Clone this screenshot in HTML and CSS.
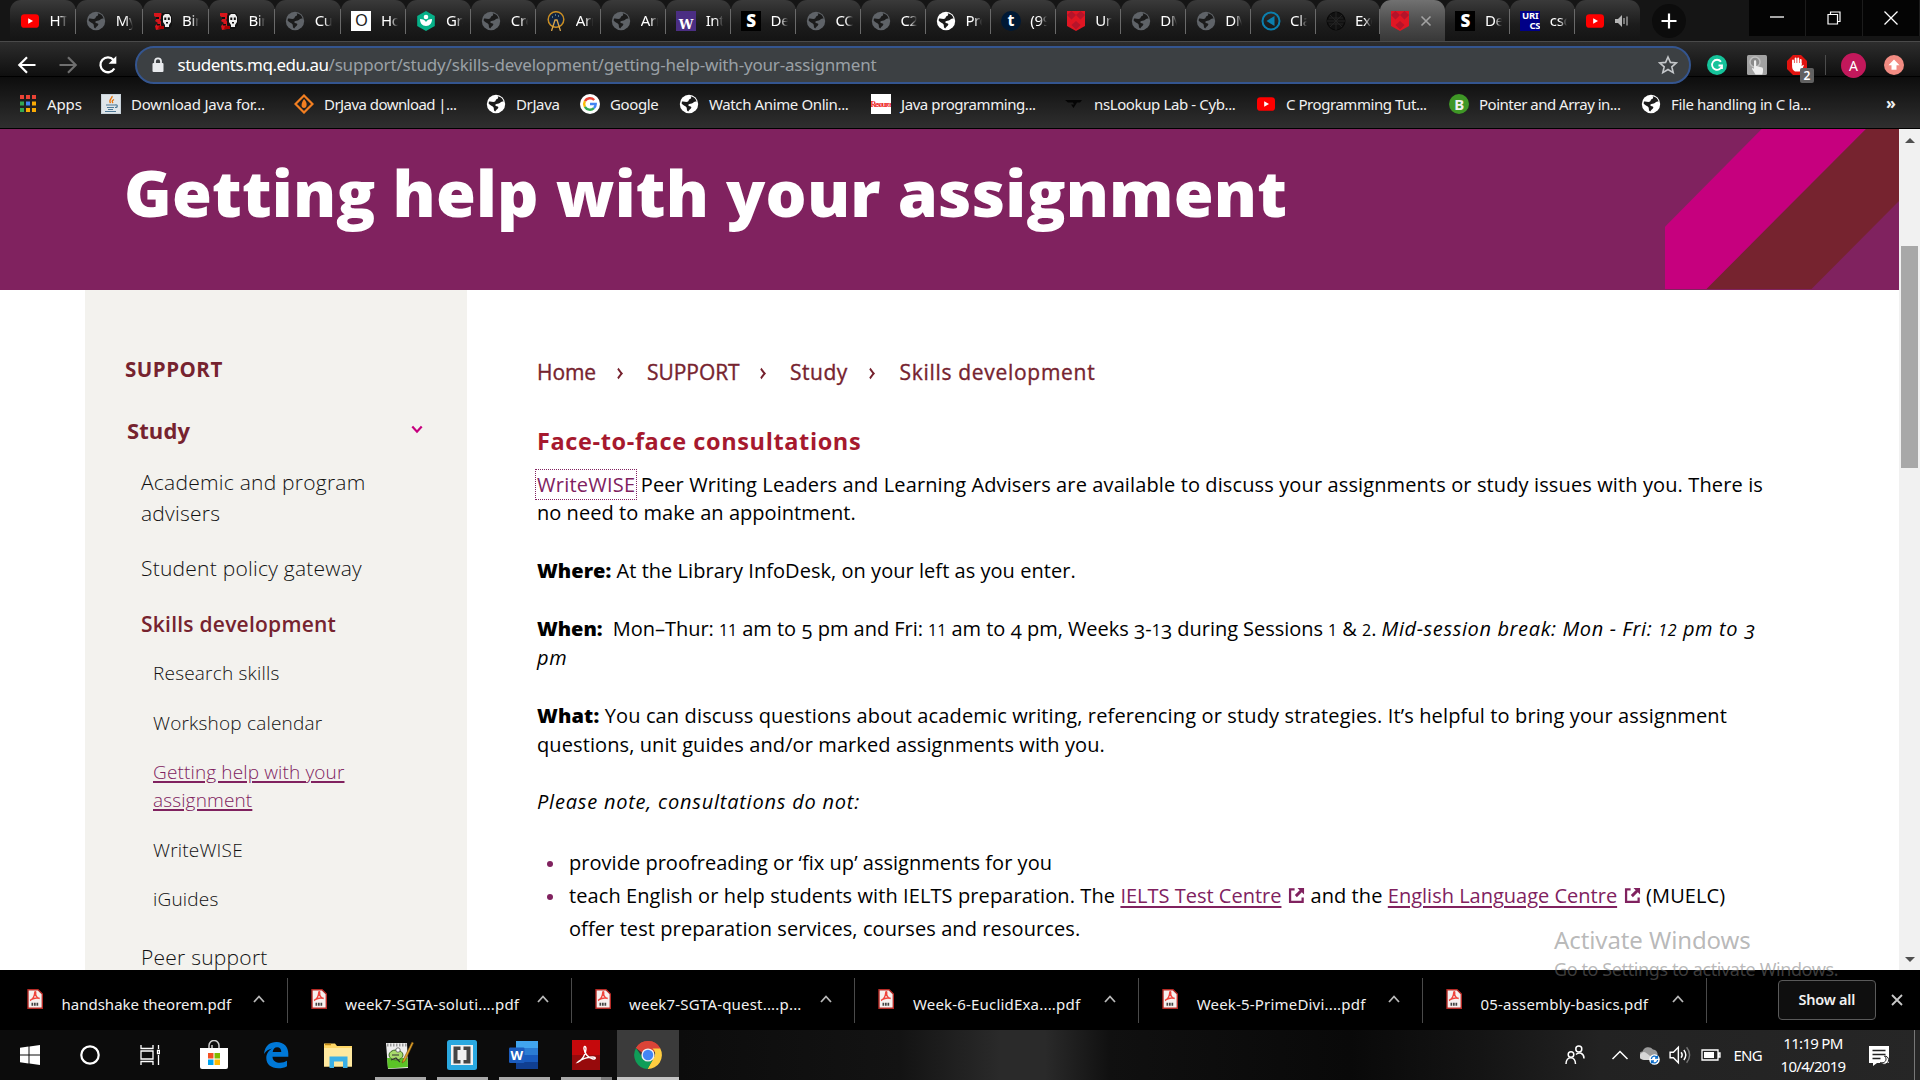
FILE: index.html
```html
<!DOCTYPE html>
<html lang="en">
<head>
<meta charset="utf-8">
<title>Getting help with your assignment</title>
<link rel="stylesheet" href="styles.css">
</head>
<body>
<svg class="defs" aria-hidden="true">
  <symbol id="globe" viewBox="0 0 20 20"><circle cx="10" cy="10" r="9.2" fill="currentColor"/><path d="M3 7.500c2-.5 3.500.8 5.500.3 1.500-.4.8-2.300 2.500-2.800 1.600-.4 1.300-1.700.6-2.700C15 2.800 17 5 17.600 7.600c-1.800-.6-2.800.4-3.800 1.400-1.200 1.200-3.300.4-4.300 1.400-1 .9.900 1.600 2.200 2.100 1.400.6.300 2.300-.9 3-.8.5-1 1.500-1.600 2-1.800-.7-1.100-2.700-1.600-4C7 12 4 11.500 2.600 9.500z" fill="#1b1b1b"/></symbol>
  <symbol id="youtube" viewBox="0 0 20 20"><rect x="1" y="3.200" width="18" height="13.600" rx="3.400" fill="#f00"/><path d="M8.200 7.200v5.600l4.800-2.800z" fill="#fff"/></symbol>
  <symbol id="isaac" viewBox="0 0 20 20"><path d="M1 2h7l2 3-3 4 2 3-1 6-5 1-1-4 3-3-3-2 2-3-3-2z" fill="#d8151b"/><path d="M3 6h3v2H3zM4 13h3v1.500H4z" fill="#111"/><path d="M9 2h8l2 4v8l-3 4h-6l-2-4V5z" fill="#111"/><path d="M10 5l2-2h4l2 3v5l-2 3v2h-4v-2l-2-3z" fill="#eee"/><path d="M11.300 6.500h2v2.500h-2zM14.800 6.500h2v2.500h-2zM13 11h2v1.500h-2z" fill="#111"/><path d="M6 15h5v3H5z" fill="#a00"/></symbol>
  <symbol id="shield" viewBox="0 0 20 20"><path d="M1 0h18v15l-9 5-9-5z" fill="#e01623"/><path d="M5.500 0L10 4 5.500 8.500 1 4zM14.500 0L19 4l-4.500 4.500L10 4zM10 10l4.500 4L10 18.500 5.500 14z" fill="#b5142a"/></symbol>
  <symbol id="pdf" viewBox="0 0 16 20"><path d="M1 .7h10L15.300 5v14.300H1z" fill="#f6f0ef" stroke="#b52a25" stroke-width="1.400"/><path d="M3 11.500c2.500-.9 4.500-4.500 4.800-8.200.1-.9 1-.8.9.1-.4 3.200 1.500 5.500 4 6.100M4 10.700c2.700-1.600 5.600-2 8.500-1.300" fill="none" stroke="#f0443c" stroke-width="1.400"/><path d="M4.500 15.200h7" stroke="#444" stroke-width="3" stroke-dasharray="1.700 .8" fill="none"/></symbol>
  <symbol id="ext" viewBox="0 0 18 18"><path d="M7 2.500H2.200v13.300h13.300V11" fill="none" stroke="currentColor" stroke-width="2.400"/><path d="M10 1h7v7l-2.400-2.400-5.200 5.200-2.200-2.200 5.200-5.200z" fill="currentColor"/></symbol>
</svg>

<header class="browser">
  <div class="tabstrip">
    <div class="tab wide"><svg class="fav"><use href="#youtube"/></svg><span class="tab-title">HTML</span></div>
    <div class="tab wide"><svg class="fav dim"><use href="#globe"/></svg><span class="tab-title">My q</span></div>
    <div class="tab wide"><svg class="fav"><use href="#isaac"/></svg><span class="tab-title">Bind</span></div>
    <div class="tab wide"><svg class="fav"><use href="#isaac"/></svg><span class="tab-title">Bind</span></div>
    <div class="tab wide"><svg class="fav dim"><use href="#globe"/></svg><span class="tab-title">Cus</span></div>
    <div class="tab"><span class="fav tile tile-o">O</span><span class="tab-title">Hov</span></div>
    <div class="tab"><svg class="fav" viewBox="0 0 20 20"><path d="M10 0l8.800 5v10L10 20l-8.800-5V5z" fill="#06b088"/><circle cx="10" cy="6" r="2.300" fill="#fff"/><path d="M4 8c3 0 5 1 6 3 1-2 3-3 6-3 0 4-2 7-6 7S4 12 4 8z" fill="#fff"/></svg><span class="tab-title">Gra</span></div>
    <div class="tab"><svg class="fav dim"><use href="#globe"/></svg><span class="tab-title">Cre</span></div>
    <div class="tab"><svg class="fav" viewBox="0 0 20 20"><circle cx="10" cy="8.500" r="7.800" fill="#10233f" stroke="#c98d22" stroke-width="1.500"/><path d="M5.500 20L9 9h2l3.500 11" fill="none" stroke="#d9a54a" stroke-width="1.300"/><path d="M6 6h1M12 5h1M9 4h1" stroke="#9cc"/></svg><span class="tab-title">Arr</span></div>
    <div class="tab"><svg class="fav dim"><use href="#globe"/></svg><span class="tab-title">Arr</span></div>
    <div class="tab"><span class="fav tile tile-w">W</span><span class="tab-title">Intr</span></div>
    <div class="tab"><span class="fav tile tile-s">S</span><span class="tab-title">Des</span></div>
    <div class="tab"><svg class="fav dim"><use href="#globe"/></svg><span class="tab-title">CO</span></div>
    <div class="tab"><svg class="fav dim"><use href="#globe"/></svg><span class="tab-title">C2C</span></div>
    <div class="tab"><svg class="fav lit"><use href="#globe"/></svg><span class="tab-title">Pro</span></div>
    <div class="tab"><span class="fav tile tile-t">t</span><span class="tab-title">(99</span></div>
    <div class="tab"><svg class="fav"><use href="#shield"/></svg><span class="tab-title">Uni</span></div>
    <div class="tab"><svg class="fav dim"><use href="#globe"/></svg><span class="tab-title">DM</span></div>
    <div class="tab"><svg class="fav dim"><use href="#globe"/></svg><span class="tab-title">DM</span></div>
    <div class="tab"><svg class="fav" viewBox="0 0 20 20"><circle cx="10" cy="10" r="8.500" fill="none" stroke="#0b7fae" stroke-width="2"/><path d="M13.500 5v10L5.500 10z" fill="#0b7fae"/></svg><span class="tab-title">Cla</span></div>
    <div class="tab"><svg class="fav" viewBox="0 0 20 20"><circle cx="10" cy="10" r="9" fill="#111" stroke="#090909"/><path d="M4 4l12 12M16 4L4 16M10 1v18M1 10h18M3 7h14M3 13h14" stroke="#242424"/></svg><span class="tab-title">Exe</span></div>
    <div class="tab tab-active"><svg class="fav"><use href="#shield"/></svg><svg class="tab-close" viewBox="0 0 12 12"><path d="M1.500 1.500l9 9M10.500 1.500l-9 9" stroke="#a3a3a3" stroke-width="1.600"/></svg></div>
    <div class="tab"><span class="fav tile tile-s">S</span><span class="tab-title">Des</span></div>
    <div class="tab"><span class="fav tile tile-u"><span>URI</span><span>CS</span></span><span class="tab-title">csc</span></div>
    <div class="tab tab-last"><svg class="fav"><use href="#youtube"/></svg><svg class="speaker" viewBox="0 0 14 12"><path d="M0 4h3l4-4v12L3 8H0z" fill="#b5b5b5"/><path d="M9 3v6M12 1.500v9" stroke="#b5b5b5" stroke-width="1.200"/></svg></div>
    <div class="newtab"><svg viewBox="0 0 16 16"><path d="M8 .5v15M.5 8h15" stroke="#fff" stroke-width="2.200"/></svg></div>
    <div class="winctl">
      <div><svg viewBox="0 0 14 14"><path d="M0 6h14" stroke="#fff" stroke-width="1.300"/></svg></div>
      <div><svg viewBox="0 0 14 14"><path d="M1 3.500h9.500V13H1zM3.500 3.500V1H13v9.500h-2.500" fill="none" stroke="#fff" stroke-width="1.200"/></svg></div>
      <div><svg viewBox="0 0 14 14"><path d="M.5.5l13 13M13.500.5l-13 13" stroke="#fff" stroke-width="1.300"/></svg></div>
    </div>
  </div>

  <div class="toolbar">
    <svg class="nav" viewBox="0 0 20 20"><path d="M18.500 10H2.500M10 2.300L2.300 10l7.700 7.700" fill="none" stroke="#fff" stroke-width="2.200"/></svg>
    <svg class="nav" viewBox="0 0 20 20"><path d="M1.500 10h16M10 2.300l7.700 7.700-7.700 7.700" fill="none" stroke="#6f6f6f" stroke-width="2.200"/></svg>
    <svg class="nav" viewBox="0 0 20 20"><path d="M16.300 13.500A7.400 7.400 0 1 1 15.500 5" fill="none" stroke="#fff" stroke-width="2.300"/><path d="M18.300 1v7.700h-7.700z" fill="#fff"/></svg>
    <div class="omnibox">
      <svg class="lock" viewBox="0 0 12 16"><path d="M3 7V4.300a3 3 0 0 1 6 0V7" fill="none" stroke="#e8eaed" stroke-width="1.800"/><rect x=".5" y="6" width="11" height="9" rx="1" fill="#e8eaed"/></svg>
      <span class="url"><span class="host">students.mq.edu.au</span><span class="path">/support/study/skills-development/getting-help-with-your-assignment</span></span>
      <svg class="star" viewBox="0 0 20 20"><path d="M10 2l2.400 5.400 5.900.5-4.500 3.900 1.400 5.800-5.200-3.100-5.200 3.100 1.400-5.800-4.500-3.900 5.900-.5z" fill="none" stroke="#c4c7ca" stroke-width="1.600"/></svg>
    </div>
    <div class="extensions">
      <svg class="ico20" viewBox="0 0 20 20"><circle cx="10" cy="10" r="10" fill="#15c39a"/><path d="M14 6.700A5 5 0 1 0 15 10.500h-3.500M15 10.500V14" fill="none" stroke="#fff" stroke-width="1.800"/></svg>
      <svg class="ico20" viewBox="0 0 20 20"><rect width="20" height="20" rx="1.500" fill="#a2a2a2"/><circle cx="8" cy="7" r="5" fill="#8b8b8b" stroke="#c0c0c0" stroke-width="1.500"/><path d="M7 6.500c0-1.600 2.200-1.600 2.200 0V11l6 1.500c1.300.4 1 5.500 0 7H8.500L5 14c0-1.200 1.200-1.200 2 0z" fill="#eee"/></svg>
      <div class="abp"><svg class="ico20" viewBox="0 0 20 20"><path d="M6 0h8l6 6v8l-6 6H6l-6-6V6z" fill="#e1130f"/><path d="M6 9V5.500M8.600 9V3.500M11.200 9V3.500M13.700 9V5" stroke="#fff" stroke-width="1.900" stroke-linecap="round"/><path d="M5.100 8h9.500v3l2-1.200c.8.500-1.600 5.700-4 6.700H8c-2-1-2.900-3-2.900-5z" fill="#fff"/></svg><span class="badge">2</span></div>
      <span class="divider"></span>
      <span class="avatar">A</span>
      <svg class="ico20" viewBox="0 0 20 20"><circle cx="10" cy="10" r="10" fill="#f28b82"/><path d="M10 4.500l5.500 5.700h-3v4.600h-5v-4.600h-3z" fill="#fff"/></svg>
    </div>
  </div>

  <nav class="bookmarks">
    <a class="bm bm-apps"><svg class="bi" viewBox="0 0 20 20"><path d="M2 1h4v4H2zM8 1h4v4H8zM14 1h4v4h-4z" fill="#ea4335"/><path d="M2 7.500h4v4H2z" fill="#34a853"/><path d="M8 7.500h4v4H8z" fill="#4285f4"/><path d="M14 7.500h4v4h-4zM8 14h4v4H8zM14 14h4v4h-4z" fill="#fbab05"/><path d="M2 14h4v4H2z" fill="#34a853"/></svg>Apps</a>
    <a class="bm bm-java"><svg class="bi" viewBox="0 0 20 20"><rect width="20" height="20" fill="#c9d3da"/><rect x="1" y="1" width="18" height="18" fill="#dfe5e9"/><path d="M11 2c1 2-4 3.500-1.500 7M13 5.500c-2 1-2.500 2-1 3.500" fill="none" stroke="#e76f00" stroke-width="1.300"/><path d="M5 11h9c3-1 3 2.500 0 2.500M6 13.500h7M7 15.500h5M4 17.500h11" fill="none" stroke="#4d7896" stroke-width="1.200"/></svg>Download Java for...</a>
    <a class="bm bm-sf"><svg class="bi" viewBox="0 0 20 20"><path d="M10 1.500l8.500 8.500-8.500 8.500L1.500 10z" fill="none" stroke="#f37f21" stroke-width="2.200"/><path d="M10 5c4 4 3 9 0 9s-3.500-4 0-9z" fill="#f37f21"/></svg>DrJava download |...</a>
    <a class="bm bm-dr"><svg class="bi lit"><use href="#globe"/></svg>DrJava</a>
    <a class="bm bm-goog"><svg class="bi" viewBox="0 0 20 20"><circle cx="10" cy="10" r="10" fill="#fff"/><g fill="none" stroke-width="2.400"><path d="M14.200 6A5.800 5.800 0 0 0 4.900 7.200" stroke="#ea4335"/><path d="M4.900 7.200a5.800 5.800 0 0 0 0 5.600" stroke="#fbbc05"/><path d="M4.900 12.800a5.800 5.800 0 0 0 9 1.300" stroke="#34a853"/><path d="M13.900 14.100A5.600 5.600 0 0 0 15.700 10H10" stroke="#4285f4"/></g></svg>Google</a>
    <a class="bm bm-anime"><svg class="bi lit"><use href="#globe"/></svg>Watch Anime Onlin...</a>
    <a class="bm bm-jp"><span class="bi tile tile-r">Resource</span>Java programming...</a>
    <a class="bm bm-ns"><svg class="bi" viewBox="0 0 20 20"><path d="M1 6h17l-2 2.500h-3L9.500 14 7 10.500h3L9 8.500H4z" fill="#050505"/></svg>nsLookup Lab - Cyb...</a>
    <a class="bm bm-c"><svg class="bi"><use href="#youtube"/></svg>C Programming Tut...</a>
    <a class="bm bm-ptr"><span class="bi tile tile-b">B</span>Pointer and Array in...</a>
    <a class="bm bm-file"><svg class="bi lit"><use href="#globe"/></svg>File handling in C la...</a>
    <span class="more">»</span>
  </nav>
</header>

<div class="viewport">
  <main class="page">
    <div class="banner">
      <h1>Getting help with your assignment</h1>
      <svg class="stripes" viewBox="0 0 234 160"><path d="M96.700 0H201L41.600 160H0V97.700z" fill="#c6007e"/><path d="M201 0h33v72l-87.500 88H41.600z" fill="#76232f"/></svg>
    </div>
    <div class="columns">
      <aside class="sidebar">
        <h2>SUPPORT</h2>
        <h3>Study<svg class="chev" viewBox="0 0 14 10"><path d="M1.500 1.500L7 7.500l5.500-6" fill="none" stroke="#c6007e" stroke-width="2.600"/></svg></h3>
        <ul class="level1">
          <li>Academic and program<br>advisers</li>
          <li>Student policy gateway</li>
          <li><strong>Skills development</strong>
            <ul class="level2">
              <li>Research skills</li>
              <li>Workshop calendar</li>
              <li><a class="current">Getting help with your<br>assignment</a></li>
              <li>WriteWISE</li>
              <li>iGuides</li>
            </ul>
          </li>
          <li>Peer support</li>
        </ul>
      </aside>
      <article class="content">
        <nav class="crumbs"><span class="c-home">Home</span><i class="sep"></i><span class="c-sup">SUPPORT</span><i class="sep"></i><span class="c-study">Study</span><i class="sep"></i><span class="c-skill">Skills development</span></nav>
        <h2>Face-to-face consultations</h2>
        <p><a class="focused">WriteWISE</a> Peer Writing Leaders and Learning Advisers are available to discuss your assignments or study issues with you. There is<br><span class="tight">no need to make an appointment.</span></p>
        <p class="tight"><b>Where:</b> At the Library InfoDesk, on your left as you enter.</p>
        <p class="when"><b>When:</b>&nbsp; Mon–Thur: <span class="fx">11</span> am to <span class="fd">5</span> pm and Fri: <span class="fx">11</span> am to <span class="fd">4</span> pm, Weeks <span class="fd">3</span>-<span class="fx">1</span><span class="fd">3</span> during Sessions <span class="fx">1</span> &amp; <span class="fx">2</span>. <em>Mid-session break: Mon - Fri: <span class="fx">12</span> pm to <span class="fd">3</span><br>pm</em></p>
        <p class="what"><b>What:</b> You can discuss questions about academic writing, referencing or study strategies. It’s helpful to bring your assignment<br><span class="guides">questions, unit guides and/or marked assignments with you.</span></p>
        <p><em class="note">Please note, consultations do not:</em></p>
        <ul class="bullets">
          <li>provide proofreading or ‘fix up’ assignments for you</li>
          <li class="teach">teach English or help students with IELTS preparation. The <a>IELTS Test Centre</a><svg class="ext"><use href="#ext"/></svg>and the <a>English Language Centre</a><svg class="ext"><use href="#ext"/></svg>(MUELC)<br>offer test preparation services, courses and resources.</li>
        </ul>
      </article>
    </div>
  </main>
  <div class="scrollbar"><i class="up"></i><i class="thumb"></i><i class="down"></i></div>
</div>

<footer class="downloads">
  <div class="dl"><svg class="pdf"><use href="#pdf"/></svg><span>handshake theorem.pdf</span><svg class="car" viewBox="0 0 12 8"><path d="M1 7l5-5.500L11 7" fill="none" stroke="#b9b9b9" stroke-width="1.800"/></svg></div>
  <div class="dl dl-w"><svg class="pdf"><use href="#pdf"/></svg><span>week7-SGTA-soluti....pdf</span><svg class="car" viewBox="0 0 12 8"><path d="M1 7l5-5.500L11 7" fill="none" stroke="#b9b9b9" stroke-width="1.800"/></svg></div>
  <div class="dl dl-w"><svg class="pdf"><use href="#pdf"/></svg><span>week7-SGTA-quest....p...</span><svg class="car" viewBox="0 0 12 8"><path d="M1 7l5-5.500L11 7" fill="none" stroke="#b9b9b9" stroke-width="1.800"/></svg></div>
  <div class="dl dl-w"><svg class="pdf"><use href="#pdf"/></svg><span>Week-6-EuclidExa....pdf</span><svg class="car" viewBox="0 0 12 8"><path d="M1 7l5-5.500L11 7" fill="none" stroke="#b9b9b9" stroke-width="1.800"/></svg></div>
  <div class="dl dl-w"><svg class="pdf"><use href="#pdf"/></svg><span>Week-5-PrimeDivi....pdf</span><svg class="car" viewBox="0 0 12 8"><path d="M1 7l5-5.500L11 7" fill="none" stroke="#b9b9b9" stroke-width="1.800"/></svg></div>
  <div class="dl dl-w"><svg class="pdf"><use href="#pdf"/></svg><span>05-assembly-basics.pdf</span><svg class="car" viewBox="0 0 12 8"><path d="M1 7l5-5.500L11 7" fill="none" stroke="#b9b9b9" stroke-width="1.800"/></svg></div>
  <button class="showall">Show all</button>
  <svg class="dlclose" viewBox="0 0 12 12"><path d="M1 1l10 10M11 1L1 11" stroke="#c8c8c8" stroke-width="1.800"/></svg>
</footer>

<div class="taskbar">
  <div class="task t-start"><svg viewBox="0 0 20 20"><path d="M0 2.800L8.500 1.600v7.900H0zM9.500 1.500L20 0v9.500H9.500zM0 10.500h8.500v7.900L0 17.200zM9.500 10.500H20V20L9.500 18.500z" fill="#fff"/></svg></div>
  <div class="task"><svg viewBox="0 0 20 20"><circle cx="10" cy="10" r="8.700" fill="none" stroke="#fff" stroke-width="2.200"/></svg></div>
  <div class="task"><svg viewBox="0 0 20 20"><path d="M1 0v3.500h12V0M1 20v-3.500h12V20M1 6h12v8H1zM18.500 0v4M18.500 10v10M17.500 5.500h2v3h-2z" fill="none" stroke="#fff" stroke-width="1.300"/></svg></div>
  <div class="task app store"><svg viewBox="0 0 30 30"><path d="M10 9V5.500a5 5 0 0 1 10 0V9M13 9V5" fill="none" stroke="#ccc" stroke-width="1.500"/><path d="M1 8h28v19a2 2 0 0 1-2 2H3a2 2 0 0 1-2-2z" fill="#fff"/><path d="M9 13h5.500v5.500H9z" fill="#f25022"/><path d="M15.500 13H21v5.500h-5.500z" fill="#7fba00"/><path d="M9 19.500h5.500V25H9z" fill="#00a4ef"/><path d="M15.500 19.500H21V25h-5.500z" fill="#ffb900"/></svg></div>
  <div class="task app"><svg viewBox="0 0 30 30"><path d="M3 14C4 5.500 9 2 15.500 2 23 2 27.300 7 27.300 13.500v3.200H11.500c.2 4.200 3.500 6 7.500 6 2.800 0 5-.8 7-2v5.600c-2.400 1.400-5.300 2-8.500 2C9.800 28.300 5.300 24 5.300 18c0-4 2.200-7.500 6-9.500C7.800 9 4.800 11 3 14zm8.700-2h8.600c0-3-1.500-4.700-4.200-4.700-2.400 0-4 1.800-4.400 4.700z" fill="#0078d7"/></svg></div>
  <div class="task app"><svg viewBox="0 0 30 30"><path d="M1 3.500h11l2 2.500h15v20.500H1z" fill="#ffd766"/><path d="M1 8h28v18.500H1z" fill="#ffe9a0"/><path d="M6.500 28V16.500h18V28H20v-6.500h-9V28z" fill="#3bb0e6"/><path d="M2 4.500h6" stroke="#c58a14" stroke-width="1.500"/></svg></div>
  <div class="task app run"><svg viewBox="0 0 30 30"><path d="M1 3h21l1 25-20 1z" fill="#eee"/><path d="M2 5h20" stroke="#999" stroke-width="3" stroke-dasharray="1.500 1.500"/><path d="M2 18h20.500l.5 9-20 1.500z" fill="#5bc427"/><ellipse cx="11" cy="15" rx="7" ry="5" fill="#a9db6c" stroke="#3e6b26" stroke-width="1"/><circle cx="13" cy="10" r="2.200" fill="#fff" stroke="#555" stroke-width=".8"/><path d="M7 15h7M6 20l5-2 4 4" stroke="#333" stroke-width="1.200" fill="none"/><path d="M27 2l-9 18-1 3 3-2 8.500-18z" fill="#e4a62a" stroke="#704a12" stroke-width=".6"/></svg></div>
  <div class="task app run"><svg viewBox="0 0 30 30"><rect width="30" height="30" rx="2.500" fill="#2aa8e0"/><rect x="4" y="5" width="22" height="20" fill="#f2f2f2"/><path d="M6.500 6.500h7V10h-3v10h3v3.500h-7zM23.500 6.500h-7V10h3v10h-3v3.500h7z" fill="#454545"/></svg></div>
  <div class="task app run"><svg viewBox="0 0 30 30"><path d="M7 1h22v7H7z" fill="#41a5ee"/><path d="M7 8h22v7H7z" fill="#2b7cd3"/><path d="M7 15h22v7H7z" fill="#185abd"/><path d="M7 22h22v7H7z" fill="#103f91"/><rect x="0" y="7.500" width="15.500" height="15.500" rx="1.200" fill="#1b5cbe"/><text class="word-w" x="7.750" y="19.500" text-anchor="middle">W</text></svg></div>
  <div class="task app run split"><svg viewBox="0 0 30 30"><rect x="1" width="28" height="30" fill="#c5090c"/><path d="M1 15h28v15H1z" fill="#970a0c"/><path d="M7 22c3.500-1 8-7.500 8-13 0-3.500-2.500-3-2 0 .7 4.500 4 9 9 10 3 .5 3-2 0-2-5 0-12 2-14.500 4.500z" fill="none" stroke="#fff" stroke-width="1.400"/></svg></div>
  <div class="task app run on"><svg viewBox="0 0 30 30"><path d="M15 15L3 8A14 14 0 0 1 27.500 8.500z" fill="#db4437"/><path d="M15 1a14 14 0 0 1 12.300 7.500H15a6.500 6.500 0 0 0-6 4L3 8A14 14 0 0 1 15 1z" fill="#db4437"/><path d="M27.300 8.500A14 14 0 0 1 14.500 29l6-11a6.500 6.500 0 0 0-1-9.500z" fill="#ffcd40"/><path d="M3 8a14 14 0 0 0 11.500 21l5.500-9.500c-4 3.500-9 1-10.500-2z" fill="#0f9d58"/><circle cx="15" cy="15" r="6.600" fill="#f1f1f1"/><circle cx="15" cy="15" r="5.200" fill="#4285f4"/></svg></div>
  <div class="tray">
    <svg class="tr people" viewBox="0 0 20 20"><g fill="none" stroke="#fff" stroke-width="1.500"><circle cx="13.800" cy="4" r="3"/><circle cx="6" cy="9.500" r="2.800"/><path d="M1 19c0-8.500 9.500-8.500 9.500 0M11 9.500c3-3 8-1.500 8 4"/></g></svg>
    <svg class="tr caret" viewBox="0 0 18 18"><path d="M1.500 13L9 5.500l7.500 7.500" fill="none" stroke="#fff" stroke-width="1.500"/></svg>
    <svg class="tr drive" viewBox="0 0 20 20"><path d="M1 14a4 4 0 0 1 1.500-7.500A6 6 0 0 1 13 4.500 5 5 0 0 1 17 12l-2 3H4z" fill="#9a9a9a"/><path d="M1 14a4 4 0 0 1 6-5.500l8 6.500H4z" fill="#d6d6d6"/><circle cx="14.500" cy="14.500" r="5.300" fill="#fff"/><path d="M11.300 14a3.300 3.300 0 0 1 5.900-1.600M17.700 15a3.300 3.300 0 0 1-5.900 1.600M17.500 10.500V13H15M11.500 18.500V16H14" fill="none" stroke="#0b6cc9" stroke-width="1.300"/></svg>
    <svg class="tr vol" viewBox="0 0 20 20"><path d="M1 7.500h3L8.500 3v14L4 12.500H1z" fill="none" stroke="#fff" stroke-width="1.300"/><path d="M11 7.500q2 2.500 0 5M13.500 5.500q3.500 4.500 0 9" fill="none" stroke="#fff" stroke-width="1.300"/><path d="M16 3q5.500 7 0 14" fill="none" stroke="#777" stroke-width="1.300"/></svg>
    <svg class="tr batt" viewBox="0 0 20 20"><path d="M1 5h16v10H1zM17.500 8h1.500v4h-1.500z" fill="none" stroke="#fff" stroke-width="1.300"/><path d="M3 7h10v6H3z" fill="#fff"/></svg>
    <span class="lang">ENG</span>
    <span class="clock"><span>11:19 PM</span><span>10/4/2019</span></span>
    <svg class="tr action" viewBox="0 0 20 20"><path d="M0 0h20v17H8l-4 3v-3H0z" fill="#fff"/><path d="M3.500 4.500h13M3.500 8.500h13M3.500 12.500h8" stroke="#222" stroke-width="1.400"/><path d="M15.500 10c4 4-.5 8-4 6.500 3 3.500 8.500 1.500 8-3 0-2-2-3.500-4-3.500z" fill="#fff" stroke="#222"/></svg>
    <i class="desk"></i>
  </div>
</div>

<div class="watermark"><div class="w1">Activate Windows</div><div class="w2">Go to Settings to activate Windows.</div></div>
</body>
</html>
```
FILE: styles.css
```css
* { box-sizing: border-box; }
body { margin: 0; width: 1920px; height: 1080px; overflow: hidden; background: #fff; font-family: "Open Sans", "Noto Sans", sans-serif; color: #000; display: flex; flex-direction: column; position: relative; }
ul { list-style: none; margin: 0; padding: 0; }
h1, h2, h3, p { margin: 0; }
svg { display: block; flex: none; }
.defs { position: absolute; width: 0; height: 0; }

/* Browser chrome */
.browser { height: 129px; flex: none; color: #fff; font-family: "Noto Sans", sans-serif; border-bottom: 1px solid #000; }
.tabstrip { height: 41px; background: #151515; display: flex; padding-left: 10px; }
.tab { width: 64.950px; height: 41px; flex: none; background: linear-gradient(#3a3a3a, #1c1c1c 60%, #141414); border-radius: 11px 11px 0 0; display: flex; align-items: center; padding-left: 10px; position: relative; overflow: hidden; }
.tab.wide { width: 66.300px; }
.tab::after { content: ""; position: absolute; right: 0; top: 9px; width: 1px; height: 25px; background: #6a6a6a; }
.tab-active { background: linear-gradient(#717171, #4a4a4a 60%, #383838); }
.tab-active::after, .tab-last::after { display: none; }
.fav { width: 20px; height: 20px; flex: none; }
.dim { color: #5f6368; }
.lit { color: #fff; }
.tile { display: flex; align-items: center; justify-content: center; overflow: hidden; font-weight: 700; line-height: 1; }
.tile-o { background: #fff; color: #222; font: 400 16px "Liberation Sans", sans-serif; }
.tile-w { background: #4b2e83; color: #fff; font: 700 13px/13px "DejaVu Serif", serif; align-items: flex-end; }
.tile-s { background: #000; color: #fff; font: 900 17px/20px "Open Sans", sans-serif; }
.tile-t { background: #001935; color: #fff; border-radius: 50%; font-size: 16px; padding-bottom: 2px; }
.tile-u { background: #000087; color: #fff; flex-direction: column; font-size: 9.500px; line-height: 10px; letter-spacing: -.2px; }
.tile-u span:last-child { align-self: flex-end; }
.tile-b { background: #3f9726; border-radius: 50%; font-size: 15px; }
.tile-r { background: #fff; color: #e22; font: 700 8px "Liberation Serif", serif; letter-spacing: -1.300px; }
.tab-title { font-size: 15px; line-height: 20px; letter-spacing: -.4px; width: 17px; margin: 0 0 1px 9.500px; overflow: hidden; white-space: nowrap; -webkit-mask: linear-gradient(90deg, #000 55%, transparent); mask: linear-gradient(90deg, #000 55%, transparent); }
.tab-close { width: 12px; height: 12px; margin-left: 10px; }
.speaker { width: 14px; height: 12px; margin-left: 10px; }
.newtab { width: 34px; height: 34px; margin: 4px 0 0 11.500px; border-radius: 50%; background: #0c0c0c; display: flex; align-items: center; justify-content: center; }
.newtab svg { width: 16px; height: 16px; }
.winctl { margin-left: auto; height: 36px; display: flex; background: #040404; }
.winctl div { width: 57px; display: flex; align-items: center; justify-content: center; border-right: 1px solid #1c1c1c; }
.winctl svg { width: 14px; height: 14px; }

.toolbar { height: 36px; background: linear-gradient(#2d2d2d, #0f0f0f); border-top: 1px solid #4a4a4a; border-bottom: 1px solid #000; display: flex; align-items: flex-start; padding-left: 17px; position: relative; z-index: 1; }
.nav { width: 20px; height: 20px; margin: 13px 20.500px 0 0; }
.omnibox { width: 1556px; flex: none; height: 38px; margin: 4px 0 0 -4px; border: 2px solid #34558f; border-radius: 19px; background: #3c4043; display: flex; align-items: center; padding: 0 11px 0 15px; }
.lock { width: 12px; height: 16px; }
.url { font-size: 17px; margin: 0 0 2px 14px; white-space: nowrap; display: flex; }
.host { letter-spacing: -.513px; color: #fff; }
.path { letter-spacing: -.18px; color: #9aa0a6; }
.star { width: 20px; height: 20px; margin-left: auto; }
.extensions { display: flex; flex: none; align-items: center; margin: 10px 0 0 16.500px; height: 26px; }
.ico20 { width: 20px; height: 20px; margin-right: 20px; }
.extensions > .ico20:last-child { margin-right: 0; }
.abp { position: relative; }
.badge { position: absolute; left: 13px; top: 13px; width: 14px; height: 15px; border-radius: 2px; background: #616161; color: #fff; font-size: 12px; line-height: 15px; text-align: center; font-weight: 600; }
.divider { width: 1px; height: 20px; background: #4c4c4c; margin: 0 15px 0 -2px; }
.avatar { width: 25px; height: 25px; border-radius: 50%; background: #c2185b; font-size: 14px; display: flex; align-items: center; justify-content: center; margin-right: 18px; }

.bookmarks { height: 51px; background: linear-gradient(#0d0d0d, #2f2f2f); display: flex; align-items: center; padding: 3px 0 0 18px; position: relative; font-size: 15px; color: #f1f1f1; }
.bm { display: flex; align-items: center; white-space: nowrap; flex: none; letter-spacing: -.38px; }
.bi { width: 20px; height: 20px; margin-right: 10px; flex: none; }
.bm-apps { width: 83px; letter-spacing: -.1px; }
.bm-apps .bi { margin-right: 9px; }
.bm-java { width: 193px; letter-spacing: -.2px; }
.bm-sf { width: 192px; letter-spacing: -.55px; }
.bm-dr { width: 94px; }
.bm-goog { width: 99px; }
.bm-anime { width: 192px; }
.bm-jp { width: 193px; letter-spacing: -.42px; }
.bm-ns { width: 192px; }
.bm-c { width: 193px; letter-spacing: -.45px; }
.bm-ptr { width: 192px; letter-spacing: -.5px; }
.bm-file { width: 192px; }
.more { position: relative; margin-left: 53px; font-weight: 700; font-size: 16px; padding-bottom: 3px; }

/* Web page */
.viewport { height: 841px; flex: none; display: flex; overflow: hidden; }
.page { width: 1899px; height: 841px; overflow: hidden; }
.banner { height: 161px; background: #80225f; display: flex; justify-content: space-between; padding-left: 124px; }
.banner h1 { color: #fff; font-weight: 800; font-size: 64.500px; line-height: 70px; margin-top: 28px; letter-spacing: .2px; white-space: nowrap; }
.stripes { width: 234px; height: 160px; }
.columns { display: flex; height: 680px; padding-left: 85px; }
.sidebar { width: 382px; flex: none; background: #f3f2ee; padding: 64px 0 0 40px; overflow: hidden; }
.sidebar h2 { font-size: 20.500px; line-height: 30px; letter-spacing: .5px; color: #76232f; }
.sidebar h3 { font-size: 22px; line-height: 30px; letter-spacing: .09px; color: #76232f; margin: 31px 0 0 2px; display: flex; align-items: center; justify-content: space-between; padding-right: 44px; }
.chev { width: 12px; height: 9px; margin-bottom: 2px; }
.level1 { margin: 22px 0 0 16px; font-weight: 300; font-size: 21px; line-height: 31px; letter-spacing: .24px; color: #111; }
.level1 > li { margin-bottom: 25px; }
.level1 > li:first-child { margin-bottom: 24px; }
.level1 strong { font-weight: 600; color: #76232f; display: block; }
.level2 { margin: 19px 0 29px 12px; font-size: 19px; line-height: 28px; letter-spacing: .2px; }
.level2 li { margin-bottom: 21.500px; }
.current { color: #80225f; text-decoration: underline; text-decoration-thickness: 2px; text-underline-offset: 2px; letter-spacing: .14px; }
.content { padding: 67px 0 0 70px; white-space: nowrap; font-size: 20px; line-height: 28.800px; letter-spacing: .12px; }
.crumbs { display: flex; align-items: center; font-size: 21px; -webkit-text-stroke: .35px #76232f; line-height: 30px; color: #76232f; }
.sep { width: 7px; height: 7px; border: solid #76232f; border-width: 2px 2px 0 0; transform: rotate(45deg) skew(8deg, 8deg); margin: 3px 25.500px 0 17.500px; }
.c-home { width: 60px; letter-spacing: -.09px; }
.c-sup { width: 93px; letter-spacing: -.05px; }
.c-study { width: 59.500px; letter-spacing: .5px; }
.c-skill { letter-spacing: .7px; }
.content h2 { font-size: 23.500px; line-height: 30px; letter-spacing: .62px; color: #a6192e; margin: 39px 0 14.600px; }
.content p { margin-bottom: 28.800px; }
.content b { font-weight: 800; }
.content em { letter-spacing: .62px; }
.content em.note { letter-spacing: .78px; }
.content a { color: #80225f; }
.content .tight { letter-spacing: .04px; }
.content .when { letter-spacing: -.04px; }
.content .what { letter-spacing: .14px; }
.content .guides { letter-spacing: .1px; }
.focused { outline: 1px dotted #80225f; outline-offset: 1px; letter-spacing: .25px; }
.fx { font-size: 16px; }
.fd { position: relative; top: 3px; }
.bullets { line-height: 33px; margin-top: 28px; letter-spacing: .03px; }
.bullets li { padding-left: 32px; position: relative; }
.bullets .teach { letter-spacing: .09px; }
.bullets li::before { content: ""; position: absolute; left: 10px; top: 15px; width: 6px; height: 6px; border-radius: 50%; background: #80225f; }
.bullets a { text-decoration: underline; text-decoration-thickness: 2px; text-underline-offset: 3px; letter-spacing: 0; }
.ext { display: inline-block; width: 17px; height: 17px; color: #80225f; margin: 0 5px 0 7px; vertical-align: -1px; }

.scrollbar { width: 21px; background: #f1f1f1; display: flex; flex-direction: column; align-items: center; padding: 9px 0 8px; }
.scrollbar i { display: block; }
.up { border: 5px solid transparent; border-top: 0; border-bottom: 5px solid #505050; }
.down { border: 5px solid transparent; border-bottom: 0; border-top: 5px solid #505050; margin-top: auto; }
.thumb { width: 17px; height: 222px; background: #a8a8a8; margin-top: 103px; }

/* Downloads shelf */
.downloads { height: 60px; flex: none; background: #000; color: #f1f1f1; font-family: "Noto Sans", sans-serif; font-size: 15px; display: flex; align-items: center; padding-left: 4px; }
.dl { width: 283.800px; height: 45px; border-right: 1px solid #4a4a4a; display: flex; align-items: center; padding: 0 22px 0 23px; }
.dl span { flex: 1; margin: 7px 0 0 18.500px; white-space: nowrap; }
.dl-w span { letter-spacing: .19px; }
.pdf { width: 16px; height: 20px; margin-bottom: 3px; }
.car { width: 12px; height: 8px; margin-bottom: 2px; }
.showall { width: 98px; height: 40px; margin-left: 71px; border: 1px solid #5a5a5a; border-radius: 4px; background: #0f0f0f; color: #f1f1f1; font: 600 14.500px "Noto Sans", sans-serif; letter-spacing: -.2px; padding: 0 0 2px; }
.dlclose { width: 12px; height: 12px; margin-left: 15px; }

/* Taskbar */
.taskbar { height: 50px; flex: none; background: linear-gradient(90deg, #0c0c0c 0, #0c0c0c 680px, #131313 900px, #2a2a2a 1000px, #2a2a2a 1045px, #101010 1110px, #090909 1350px, #141414 1480px, #222 1600px, #262626 1920px); color: #fff; display: flex; font-family: "Noto Sans", sans-serif; }
.task { width: 60px; height: 50px; display: flex; align-items: center; justify-content: center; position: relative; }
.task svg { width: 20px; height: 20px; }
.app { width: 62px; }
.store { margin-left: 2.500px; }
.app svg { width: 30px; height: 30px; }
.word-w { font: 700 13px "Noto Sans", sans-serif; fill: #fff; }
.run::after { content: ""; position: absolute; left: 6px; right: 5px; bottom: 0; height: 3px; background: #a9a9a9; }
.split::after { border-right: 11px solid #7c7c7c; }
.on { background: #3b3b3b; }
.on::after { left: 0; right: 0; background: #c4c4c4; }
.tray { margin-left: auto; display: flex; align-items: center; }
.tr { width: 20px; height: 20px; }
.people { margin-right: 26px; }
.caret { width: 18px; margin-right: 11px; }
.drive { margin-right: 9px; }
.vol { width: 22px; height: 22px; margin-right: 10px; }
.batt { margin-right: 12.500px; }
.lang { width: 30.500px; font-size: 15px; letter-spacing: -.8px; }
.clock { width: 98px; display: flex; flex-direction: column; align-items: center; font-size: 15px; line-height: 23px; letter-spacing: -.7px; }
.action { margin: 2px 25px 0 7px; }
.desk { width: 1px; height: 50px; background: #777; margin-right: 5px; }

.watermark { position: absolute; left: 1554px; top: 923px; color: rgba(118, 118, 118, .52); font-family: "Noto Sans", sans-serif; white-space: nowrap; }
.w1 { font-size: 24px; line-height: 34px; letter-spacing: -.1px; }
.w2 { font-size: 18px; line-height: 25px; letter-spacing: -.4px; }
```
